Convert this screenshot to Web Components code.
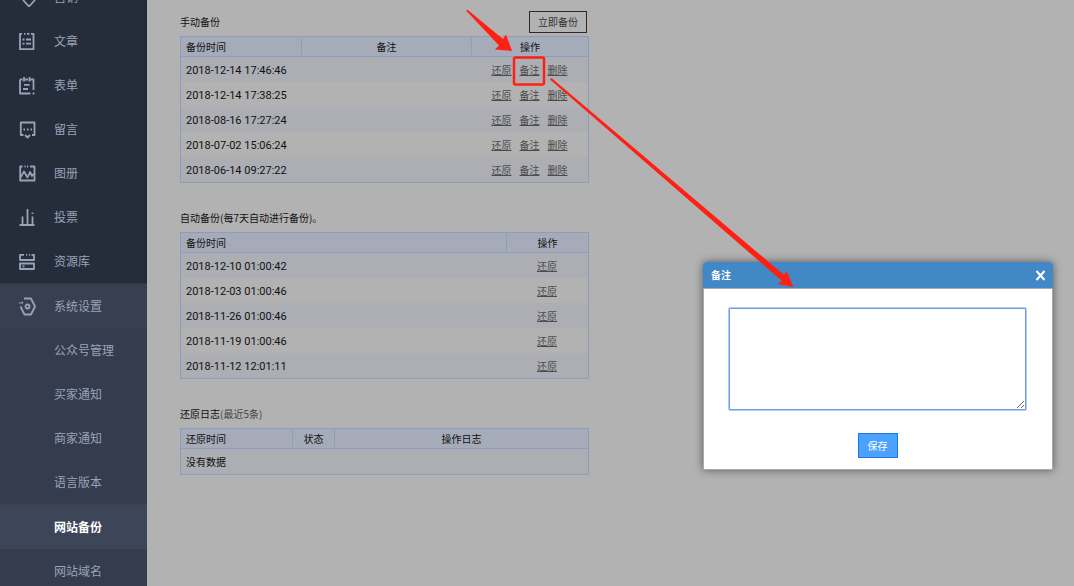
<!DOCTYPE html>
<html lang="zh-CN">
<head>
<meta charset="utf-8">
<title>网站备份</title>
<style>
body{margin:0;overflow:hidden;font-family:"Noto Sans CJK SC",sans-serif;font-size:10px;line-height:16px;color:#111}
</style>
</head>
<body>
<app-shell>
  <side-menu slot="side">
    <menu-item icon="tag">营销</menu-item>
    <menu-item icon="article">文章</menu-item>
    <menu-item icon="form">表单</menu-item>
    <menu-item icon="message">留言</menu-item>
    <menu-item icon="album">图册</menu-item>
    <menu-item icon="vote">投票</menu-item>
    <menu-item icon="library">资源库</menu-item>
    <menu-item slot="group" icon="settings" open>系统设置</menu-item>
    <menu-item slot="group">公众号管理</menu-item>
    <menu-item slot="group">买家通知</menu-item>
    <menu-item slot="group">商家通知</menu-item>
    <menu-item slot="group">语言版本</menu-item>
    <menu-item slot="group" current>网站备份</menu-item>
    <menu-item slot="group">网站域名</menu-item>
  </side-menu>
  <backup-section kind="manual"><span>手动备份</span><plain-button slot="action">立即备份</plain-button></backup-section>
  <backup-section kind="auto"><span>自动备份(每7天自动进行备份)。</span></backup-section>
  <backup-section kind="log"><span>还原日志<span style="color:#444">(最近5条)</span></span></backup-section>
  <note-dialog slot="over"></note-dialog>
  <guide-marks slot="over"></guide-marks>
</app-shell>
<script>
const define = (name, render) => customElements.define(name, class extends HTMLElement {
  connectedCallback() {
    if (!this.shadowRoot) this.attachShadow({mode: 'open'}).innerHTML = render(this);
  }
});

define('app-shell', () => `<style>
:host{display:grid;grid-template-columns:147px 1fr;height:100vh;position:relative;overflow:hidden}
main{background:#b2b2b2;padding:11px 33px;min-width:0}
.list{display:flex;flex-direction:column;gap:24px;max-width:409px}
</style><slot name="side"></slot><main><div class="list"><slot></slot></div></main><slot name="over"></slot>`);

define('side-menu', () => `<style>
:host{display:block;background:#262d3a;overflow:hidden;box-shadow:inset -1px 0 #222936}
nav{margin-top:-25px}
.group{background:#343c4e;border-top:1px solid #2f3646}
</style><nav aria-label="主菜单"><slot></slot><div class="group"><slot name="group"></slot></div></nav>`);

const icons = {
  tag: '<path d="M5 12l6 6.500 6-6.500"/>',
  article: '<path d="M4 1.800H2v15.400h13.500V1.800H13M6 1.800h1.500M9 1.800h2.500M4.500 7.500h2M8 7.500h5M4.500 11.700h2M8 11.700h5"/>',
  form: '<path d="M2 3.500v14h10.500M2 3.500h2.500M7 3.500h3M12.500 3.500h3v10.500M15.500 16.500v2M6 1v4.500M11.500 1v4.500M6 8.800h5.500M5 13h5"/>',
  message: '<path d="M5.500 15H2.800V2.500h13.700V15h-2.500M7 15l2.500 2.500L12 15M5.500 9.500h1.500M9 9.500h1.500M12.500 9.500h1.500"/>',
  album: '<path d="M4.500 2.500H2.200v14h14.300v-14H12M6.500 2.500h1.200M9 2.500h1.200M2.500 13.500L6 7.500l3.500 6L12 8l2 4 2-2.500"/>',
  vote: '<path d="M1.500 17h15M4.500 17V8.500M9.500 17V1M14.500 17V8.500M14.500 4.500v1.500"/>',
  library: '<path d="M6 2.800H2V8h14V2.800h-2.500M8 2.800h1.200M11 2.800h1.200M2 11.500h14V17H2zM4.500 14.300h2"/>',
  settings: '<path d="M6 1.500h7l4 8-4 8H6.500L2.500 9.500M4.500 5L3.800 6.500M1.500 6h1"/><circle cx="9.500" cy="9.500" r="2"/>'
};
define('menu-item', el => {
  const icon = icons[el.getAttribute('icon')];
  return `<style>
:host{display:block}
a{display:grid;grid-template-columns:18px 1fr;column-gap:18px;align-items:center;height:44px;padding-left:18px;
  font-size:12px;line-height:18px;color:#98a3b8;text-decoration:none;white-space:nowrap}
svg{width:18px;height:19px;fill:none;stroke:#98a3b8;stroke-width:1.8;stroke-linejoin:round}
:host([open]) a{background:#373f51}
:host([current]) a{background:#3d4559;color:#fff;font-weight:700}
:host([current]){border-top:1px solid #394155}
</style><a href="#">${icon ? `<svg viewBox="0 0 18 19" aria-hidden="true">${icon}</svg>` : '<i></i>'}<span><slot></slot></span></a>`;
});

define('plain-button', () => `<style>
:host{display:block}
button{display:block;height:22px;padding:0 8px;border:1px solid #2b2b2b;background:none;font:inherit;line-height:20px;color:#333}
</style><button type="button"><slot></slot></button>`);

const tables = {
  manual: {
    cols: [['备份时间', 120], ['备注', 170], ['操作', 0]],
    rows: ['2018-12-14 17:46:46', '2018-12-14 17:38:25', '2018-08-16 17:27:24', '2018-07-02 15:06:24', '2018-06-14 09:27:22']
      .map(t => [t, '', ['还原', '备注', '删除']])
  },
  auto: {
    cols: [['备份时间', 325], ['操作', 0]],
    rows: ['2018-12-10 01:00:42', '2018-12-03 01:00:46', '2018-11-26 01:00:46', '2018-11-19 01:00:46', '2018-11-12 12:01:11']
      .map(t => [t, ['还原']])
  },
  log: {cols: [['还原时间', 111], ['状态', 42], ['操作日志', 0]], rows: []}
};
define('backup-section', el => {
  const {cols, rows} = tables[el.getAttribute('kind')];
  const cell = v => Array.isArray(v)
    ? `<td><div class="links">${v.map(l => `<a href="#">${l}</a>`).join('')}</div></td>`
    : `<td>${v && `<time>${v}</time>`}</td>`;
  return `<style>
:host{display:block}
header{display:flex;justify-content:space-between;align-items:center;height:22px;padding-right:2px;margin-bottom:3px}
::slotted(span){color:#111}
table{width:100%;table-layout:fixed;border-collapse:separate;border-spacing:0;border:1px solid #8e9dbb}
th,td{padding:0;font-weight:400}
th{height:19px;background:#a5abb8;border-bottom:1px solid #8e9dbb;text-align:center;line-height:17px}
th span{display:block;border-left:1px solid #8e9dbb}
th:first-child span{border:0}
th:first-child{text-align:left;padding-left:5px}
td{height:25px}
td:first-child{padding-left:5px}
tr:nth-child(odd) td{background:#acaeb4}
time{display:block;padding-top:2px;font-family:Roboto,sans-serif;font-size:11px}
.links{display:flex;justify-content:center;gap:8px}
a{color:#4c4c4c;text-decoration:underline;text-underline-offset:1px}
</style><header><slot></slot><slot name="action"></slot></header>
<table><colgroup>${cols.map(c => `<col${c[1] ? ` style="width:${c[1]}px"` : ''}>`).join('')}</colgroup>
<thead><tr>${cols.map(c => `<th scope="col"><span>${c[0]}</span></th>`).join('')}</tr></thead>
<tbody>${rows.length ? rows.map(r => `<tr>${r.map(cell).join('')}</tr>`).join('') : `<tr><td colspan="${cols.length}">没有数据</td></tr>`}</tbody></table>`;
});

define('note-dialog', () => `<style>
:host{position:absolute;right:21px;top:262px;width:350px}
section{background:#fff;border:1px solid #aaa;border-top:0;border-radius:3px 3px 0 0;box-shadow:0 0 8px rgba(0,0,0,.5)}
header{display:flex;justify-content:space-between;align-items:center;height:26px;padding:0 7px 0 8px;margin:0 -1px;
  background:#4288c6;border-bottom:1px solid #aaa;border-radius:3px 3px 0 0;color:#fff}
h2{margin:0;font-size:10px;line-height:16px;font-weight:700}
header button{display:flex;padding:0;border:0;background:none}
svg{width:11px;height:11px;stroke:#fff;stroke-width:2}
form{display:flex;flex-direction:column;align-items:center;gap:23px;margin:0;padding:19px 26px 11px 25px}
textarea{box-sizing:border-box;display:block;width:100%;height:102px;border:1px solid #6f9be0;border-radius:1px;
  box-shadow:0 0 0 1px #b3cdf8;outline:0;background:#fff}
.save{height:25px;padding:0 9px;border:1px solid #1f7bd2;background:#4aa1ff;color:#fff;font:inherit;line-height:22px}
</style><section role="dialog" aria-labelledby="t"><header><h2 id="t">备注</h2>
<button type="button" aria-label="关闭"><svg viewBox="0 0 11 11"><path d="M1.500 1l8 9M9.500 1l-8 9"/></svg></button></header>
<form><textarea aria-label="备注"></textarea><button class="save" type="button">保存</button></form></section>`);

define('guide-marks', () => `<style>
:host{position:absolute;left:0;top:0;pointer-events:none}
svg{display:block;width:1074px;height:586px}
</style><svg viewBox="0 0 1074 586" fill="#ff2013" aria-hidden="true">
<path d="M466 10.500l1.500-.8L503 39l3-4.500 6 16.500-17-1.500 4-4z"/>
<path d="M550 79.500l1.500-1.500L784 275l2.500-4 7 16-16-3 4.500-3z"/>
<rect x="514" y="57.500" width="30" height="27" rx="1.500" fill="none" stroke="#ff2013" stroke-width="2.500"/>
</svg>`);
</script>
</body>
</html>
